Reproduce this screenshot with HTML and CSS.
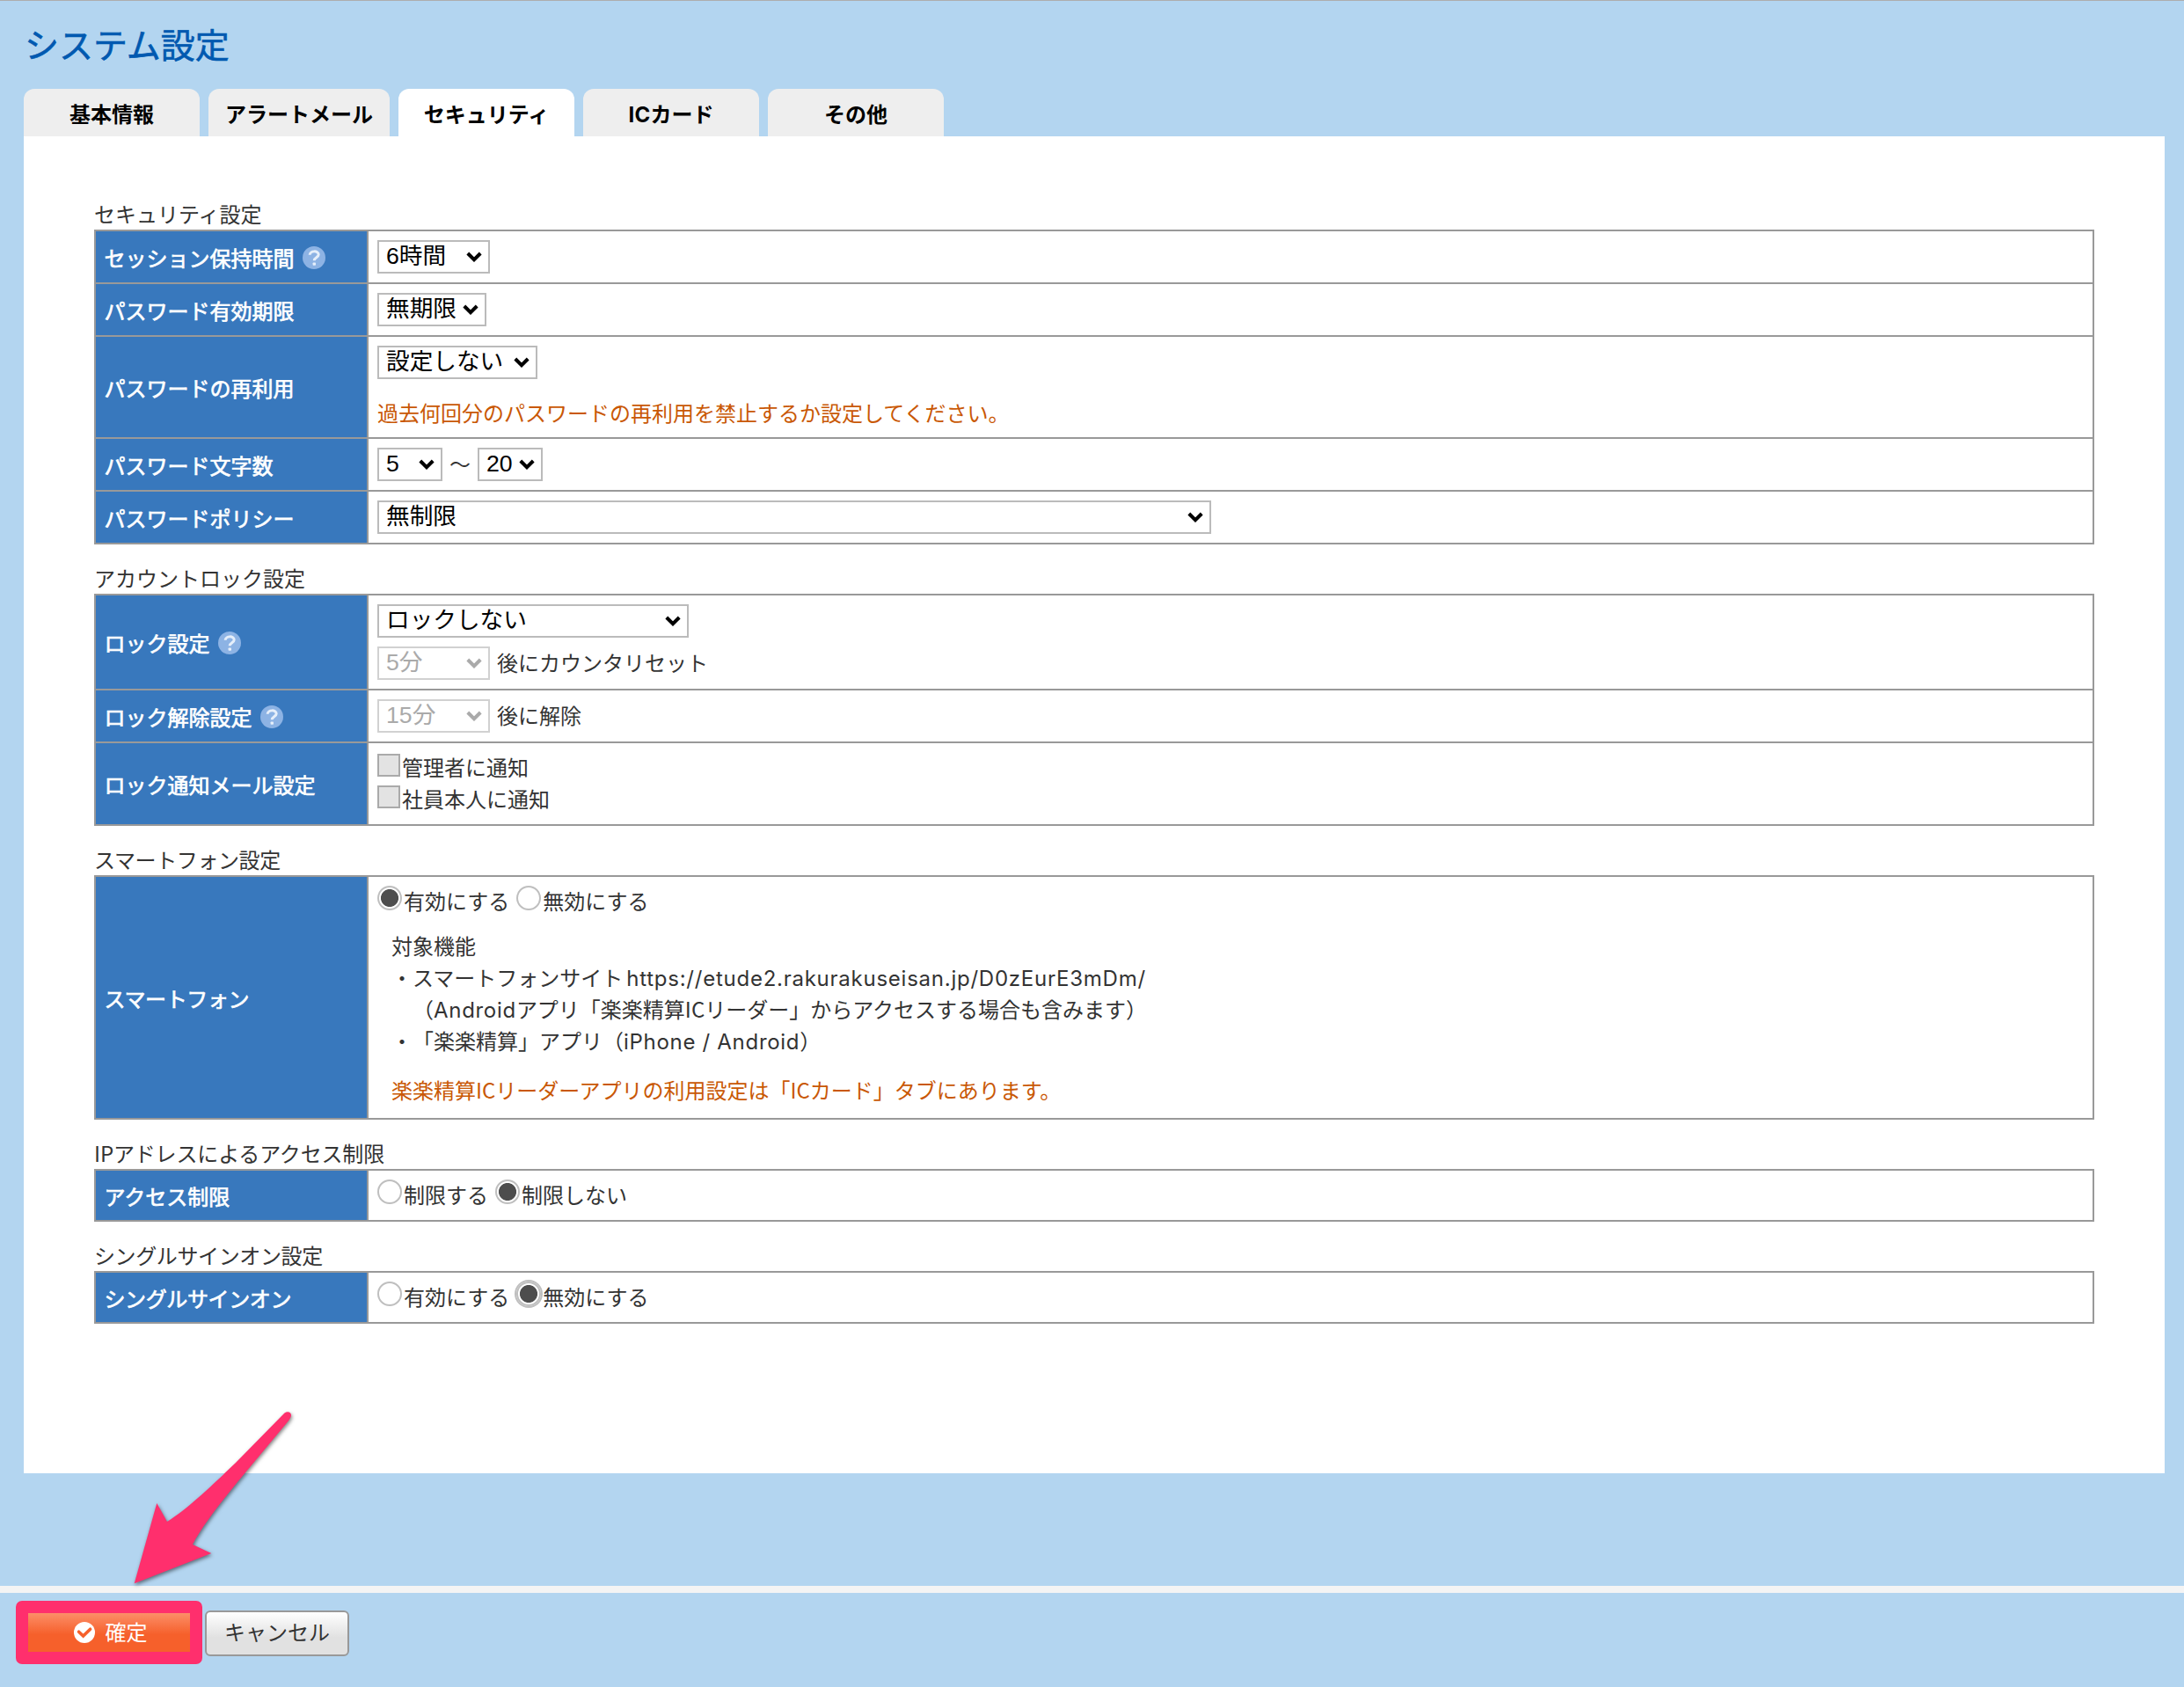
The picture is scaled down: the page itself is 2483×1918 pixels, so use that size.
FILE: index.html
```html
<!DOCTYPE html>
<html lang="ja">
<head>
<meta charset="utf-8">
<title>システム設定</title>
<link rel="stylesheet" href="styles.css">
</head>
<body>
<svg class="defs" width="0" height="0" aria-hidden="true">
  <symbol id="chevron" viewBox="0 0 18 12"><path d="M1.8 2 9 9.2 16.2 2" fill="none" stroke="currentColor" stroke-width="4"/></symbol>
  <symbol id="help" viewBox="0 0 26 26"><circle cx="13" cy="13" r="13" fill="#8db3e4"/><path d="M8.2 9.8C8.4 4.6 18.2 4.6 18.2 9.6 18.2 12.7 13.2 12.9 13.2 16.2" fill="none" stroke="#e6effa" stroke-width="3"/><rect x="11.6" y="18.4" width="3.4" height="3.4" rx=".8" fill="#e6effa"/></symbol>
</svg>
<main class="main">
  <h1 class="title">システム設定</h1>
  <nav class="tabs">
    <a class="tab">基本情報</a>
    <a class="tab">アラートメール</a>
    <a class="tab tab-active">セキュリティ</a>
    <a class="tab"><span class="latin">IC</span>カード</a>
    <a class="tab">その他</a>
  </nav>
  <div class="panel">
    <section class="group">
      <h2 class="caption">セキュリティ設定</h2>
      <dl class="table">
        <div class="row"><dt class="label"><span>セッション保持時間</span><svg class="help"><use href="#help"/></svg></dt>
          <dd class="field"><div class="line"><span class="select w-128"><span>6時間</span><svg class="chev"><use href="#chevron"/></svg></span></div></dd></div>
        <div class="row"><dt class="label"><span>パスワード有効期限</span></dt>
          <dd class="field"><div class="line"><span class="select w-124"><span>無期限</span><svg class="chev"><use href="#chevron"/></svg></span></div></dd></div>
        <div class="row"><dt class="label"><span>パスワードの再利用</span></dt>
          <dd class="field"><div class="line"><span class="select w-182"><span>設定しない</span><svg class="chev"><use href="#chevron"/></svg></span></div>
            <p class="note note-reuse">過去何回分のパスワードの再利用を禁止するか設定してください。</p></dd></div>
        <div class="row"><dt class="label"><span>パスワード文字数</span></dt>
          <dd class="field"><div class="line"><span class="select w-74"><span>5</span><svg class="chev"><use href="#chevron"/></svg></span><span class="tilde">～</span><span class="select w-74"><span>20</span><svg class="chev"><use href="#chevron"/></svg></span></div></dd></div>
        <div class="row"><dt class="label"><span>パスワードポリシー</span></dt>
          <dd class="field"><div class="line"><span class="select w-948"><span>無制限</span><svg class="chev"><use href="#chevron"/></svg></span></div></dd></div>
      </dl>
    </section>

    <section class="group">
      <h2 class="caption">アカウントロック設定</h2>
      <dl class="table">
        <div class="row"><dt class="label"><span>ロック設定</span><svg class="help"><use href="#help"/></svg></dt>
          <dd class="field field-stack"><div class="line"><span class="select w-354"><span>ロックしない</span><svg class="chev"><use href="#chevron"/></svg></span></div>
            <div class="line"><span class="select w-128 disabled"><span>5分</span><svg class="chev"><use href="#chevron"/></svg></span><span class="suffix">後にカウンタリセット</span></div></dd></div>
        <div class="row"><dt class="label"><span>ロック解除設定</span><svg class="help"><use href="#help"/></svg></dt>
          <dd class="field"><div class="line"><span class="select w-128 disabled"><span>15分</span><svg class="chev"><use href="#chevron"/></svg></span><span class="suffix">後に解除</span></div></dd></div>
        <div class="row"><dt class="label"><span>ロック通知メール設定</span></dt>
          <dd class="field"><div class="choice"><span class="checkbox"></span><span>管理者に通知</span></div>
            <div class="choice"><span class="checkbox"></span><span>社員本人に通知</span></div></dd></div>
      </dl>
    </section>

    <section class="group">
      <h2 class="caption tight">スマートフォン設定</h2>
      <dl class="table">
        <div class="row"><dt class="label"><span class="tight">スマートフォン</span></dt>
          <dd class="field"><div class="radios"><span class="radio radio-on"></span><span>有効にする</span><span class="radio"></span><span>無効にする</span></div>
            <div class="detail">
              <p>対象機能</p>
              <p>・スマートフォンサイト<span class="url">https://etude2.rakurakuseisan.jp/D0zEurE3mDm/</span></p>
              <p class="indent">（<span class="latin latin-wide">Android</span>アプリ「楽楽精算ICリーダー」からアクセスする場合も含みます）</p>
              <p>・「楽楽精算」アプリ（<span class="latin latin-wide">iPhone / Android</span>）</p>
              <p class="note note-app">楽楽精算ICリーダーアプリの利用設定は「ICカード」タブにあります。</p>
            </div></dd></div>
      </dl>
    </section>

    <section class="group">
      <h2 class="caption caption-ip">IPアドレスによるアクセス制限</h2>
      <dl class="table">
        <div class="row"><dt class="label"><span>アクセス制限</span></dt>
          <dd class="field"><div class="radios"><span class="radio"></span><span>制限する</span><span class="radio radio-on"></span><span>制限しない</span></div></dd></div>
      </dl>
    </section>

    <section class="group">
      <h2 class="caption tight">シングルサインオン設定</h2>
      <dl class="table">
        <div class="row"><dt class="label"><span class="tight">シングルサインオン</span></dt>
          <dd class="field"><div class="radios"><span class="radio"></span><span>有効にする</span><span class="radio radio-on radio-focus"></span><span>無効にする</span></div></dd></div>
      </dl>
    </section>
  </div>
</main>
<footer class="footer">
  <button class="confirm" type="button"><svg class="check" viewBox="0 0 24 24"><circle cx="12" cy="12" r="12" fill="#fff"/><path d="M5.6 11.2 10.6 16 18.6 8.2" fill="none" stroke="#f6602b" stroke-width="3.6" stroke-linecap="round"/></svg><span class="confirm-text">確定</span></button>
  <button class="cancel" type="button">キャンセル</button>
</footer>
<svg class="arrow" viewBox="140 1595 204 220" width="204" height="220" aria-hidden="true">
  <path d="M152.7 1800.3 178.3 1709 190 1730C213 1716 243 1687 268 1663L323.5 1606.5C328 1603 333.500 1607 329.800 1612.500L328.300 1615 278.300 1675C255 1703 231 1733 219 1756L240.300 1766Z" fill="#ff2f6d"/>
</svg>
</body>
</html>
```
FILE: styles.css
```css
* { box-sizing: border-box; }
body {
  margin: 0;
  height: 1918px;
  background: #b3d5f0;
  border-top: 1px solid #adadad;
  color: #333;
  font: 24px/36px "Noto Sans CJK JP", sans-serif;
  text-spacing-trim: space-all;
  overflow: hidden;
}
h1, h2, p, dl, dd { margin: 0; font-weight: 400; }
.defs { position: absolute; }
.main { height: 1802px; padding: 19px 22px 0 27px; }
.title {
  height: 81px;
  padding-left: 1px;
  color: #0059b0;
  font-size: 39px;
  line-height: 58px;
  -webkit-text-stroke: .6px currentColor;
}
.latin { font-family: Inter, "Noto Sans CJK JP", sans-serif; letter-spacing: .3px; line-height: 1; }
.latin-wide { letter-spacing: .7px; }
.url { padding-left: 4px; font-family: Inter, sans-serif; line-height: 1; letter-spacing: .75px; }
.tight { letter-spacing: -.38px; }
.tabs { display: flex; gap: 10px; height: 54px; }
.tab {
  min-width: 200px;
  padding: 2px 19px 0;
  border-radius: 12px 12px 0 0;
  background: #eee;
  color: #000;
  font-weight: 700;
  line-height: 52px;
  text-align: center;
}
.tab-active { background: #fff; }
.panel { height: 1520px; padding: 70px 80px 0; background: #fff; }
.group { margin-bottom: 20px; }
.caption { height: 36px; font-size: 24px; line-height: 36px; }
.caption-ip { letter-spacing: -.15px; }
.table { display: grid; gap: 2px; padding: 2px; background: #999; }
.row { display: grid; grid-template-columns: 308px 1fr; gap: 2px; }
.label {
  display: flex;
  align-items: center;
  gap: 9px;
  padding: 1px 10px 0 9.5px;
  background: #3878bd;
  color: #fff;
  -webkit-text-stroke: .7px currentColor;
}
.help { width: 26px; height: 26px; margin-top: 1px; -webkit-text-stroke: 0; }
.field { padding: 10px; background: #fff; }
.field-stack { display: grid; gap: 10px; }
.line { display: flex; align-items: center; height: 38px; }
.select {
  display: flex;
  align-items: center;
  justify-content: space-between;
  height: 38px;
  padding: 0 7px 2px 8px;
  border: 2px solid #bbb;
  background: #fff;
  color: #000;
  font: 26.67px/34px "Liberation Sans", "Noto Sans CJK JP", sans-serif;
}
.w-74 { width: 74px; }
.w-124 { width: 124px; }
.w-128 { width: 128px; }
.w-182 { width: 182px; }
.w-354 { width: 354px; }
.w-948 { width: 948px; }
.disabled { border-color: #d1d1d1; color: #aaa; }
.chev { width: 18px; height: 12px; margin-top: 1px; }
.tilde { width: 40px; padding-bottom: 2px; text-align: center; }
.suffix { padding: 0 0 2px 8px; }
.note { color: #c95805; }
.note-reuse { height: 36px; margin-top: 20px; line-height: 35px; }
.choice { display: flex; gap: 2px; height: 36px; line-height: 34px; }
.checkbox { width: 26px; height: 26px; margin-top: 2px; border: 2px solid #aaa; background: #e3e3e3; }
.radios { display: flex; height: 36px; line-height: 34px; }
.radio {
  width: 28px;
  height: 28px;
  margin: 0 2px 0 0;
  border: 2px solid #bfbfbf;
  border-radius: 50%;
  background: #fff;
}
span + .radio { margin-left: 8px; }
.radio-on { background: radial-gradient(circle, #4d4d4d 9.600px, #fff 10.400px); }
.radio-focus { box-shadow: 0 0 0 2px #bfbfbf; }
.detail { padding: 14px 0 4px 16px; }
.detail p { height: 36px; }
.indent { padding-left: 24px; }
.note-app { margin-top: 20px; }
.footer {
  display: flex;
  align-items: flex-start;
  gap: 3px;
  height: 115px;
  padding: 9px 18px 0;
  border-top: 8px solid #f4f4f4;
}
.confirm, .cancel { font: 24px/36px "Noto Sans CJK JP", sans-serif; }
.confirm {
  display: flex;
  align-items: center;
  justify-content: center;
  gap: 12px;
  width: 212px;
  height: 72px;
  padding: 0 0 0 3px;
  border: 14px solid #ff2f6d;
  border-radius: 7px;
  background: linear-gradient(#fc8e68, #f6602b 55%) padding-box;
  color: #fff;
}
.confirm-text { padding-bottom: 2px; }
.check { width: 24px; height: 24px; }
.cancel {
  width: 164px;
  height: 52px;
  margin-top: 11px;
  padding: 0 0 4px;
  border: 2px solid #999;
  border-radius: 6px;
  background: linear-gradient(#fff, #e1e1e1 60%);
  color: #333;
}
.arrow { position: absolute; left: 140px; top: 1595px; filter: drop-shadow(1px 2px 2px rgba(0, 0, 0, .5)); }
```
